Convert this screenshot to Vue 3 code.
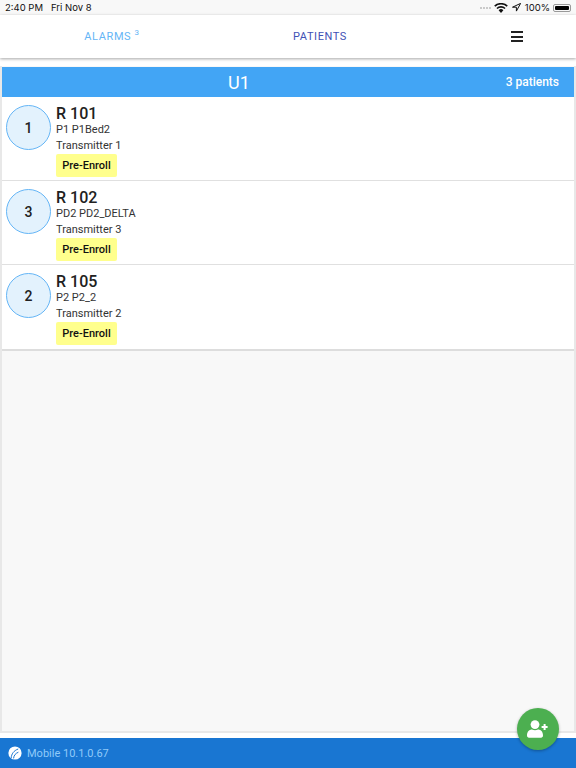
<template>
  <div class="screen">
    <div class="status-bar">
      <span class="status-time">2:40 PM</span>
      <span class="status-date">Fri Nov 8</span>
      <span class="status-right">
        <span class="dots"><i v-for="n in 4" :key="n"></i></span>
        <svg class="wifi" width="14" height="10" viewBox="0 0 14 10">
          <path d="M7 10 4.6 7.3a3.4 3.4 0 0 1 4.8 0z" fill="#111" />
          <path d="M3.5 6.1a5 5 0 0 1 7 0l1.1-1.2a6.7 6.7 0 0 0-9.2 0z" fill="#111" />
          <path d="M1.3 3.8a8.2 8.2 0 0 1 11.4 0l1.1-1.2A9.9 9.9 0 0 0 .2 2.6z" fill="#111" />
        </svg>
        <svg class="arrow" width="9" height="9" viewBox="0 0 9 9">
          <path d="M8.6.4.5 4.2h3.9v3.9z" fill="none" stroke="#111" stroke-width="1" />
        </svg>
        <span class="battery-text">100%</span>
        <span class="battery"><span class="battery-fill"></span></span>
      </span>
    </div>

    <nav class="nav">
      <a class="tab tab-alarms">ALARMS <sup>3</sup></a>
      <a class="tab tab-patients">PATIENTS</a>
      <div class="menu"><i></i><i></i><i></i></div>
    </nav>

    <main class="content">
      <section class="panel">
        <header class="panel-head">
          <span class="unit">U1</span>
          <span class="count">3 patients</span>
        </header>
        <div v-for="row in rows" :key="row.room" class="row">
          <div class="circle">{{ row.num }}</div>
          <div class="info">
            <div class="room">{{ row.room }}</div>
            <div class="line">{{ row.name }}</div>
            <div class="line">{{ row.tx }}</div>
            <div class="tag">Pre-Enroll</div>
          </div>
        </div>
      </section>
    </main>

    <footer class="footer">
      <svg class="logo" width="14" height="14" viewBox="0 0 14 14">
        <circle cx="7" cy="7" r="6.6" fill="#fff" />
        <path d="M3.2 12c.2-4 2.6-7.4 7-9M5.6 12.4c.2-2.8 1.8-5 4.8-6.2" fill="none" stroke="#1976d2" stroke-width="1" />
      </svg>
      <span class="version">Mobile 10.1.0.67</span>
    </footer>

    <button class="fab">
      <svg width="22" height="18" viewBox="0 0 22 18">
        <circle cx="8" cy="4.6" r="4.4" fill="#fff" />
        <path d="M0 15.6c0-4 2.4-6 5-6 1 .5 1.900.7 3 .7s2-.2 3-.7c2.600 0 5 2 5 6 0 1.400-.8 2.100-2 2.100H2c-1.200 0-2-.7-2-2.100z" fill="#fff" />
        <path d="M17.600 4v6M14.600 7h6" stroke="#fff" stroke-width="2" />
      </svg>
    </button>
  </div>
</template>

<script setup>
const rows = [
  { num: 1, room: "R 101", name: "P1 P1Bed2", tx: "Transmitter 1" },
  { num: 3, room: "R 102", name: "PD2 PD2_DELTA", tx: "Transmitter 3" },
  { num: 2, room: "R 105", name: "P2 P2_2", tx: "Transmitter 2" },
];
</script>

<style>
html,
body {
  margin: 0;
  background: #fff;
}
</style>

<style scoped>
.screen {
  position: relative;
  width: 576px;
  height: 768px;
  display: flex;
  flex-direction: column;
  overflow: hidden;
  font-family: Roboto, "Liberation Sans", sans-serif;
  background: #fff;
  color: #212121;
}

.status-bar {
  height: 15px;
  flex: none;
  display: flex;
  align-items: center;
  padding: 0 5px;
  background: #f8f8f8;
  font-size: 9.5px;
  color: #111;
  font-family: Inter, "Liberation Sans", sans-serif;
}
.status-date {
  margin-left: 8px;
}
.status-right {
  margin-left: auto;
  display: flex;
  align-items: center;
}
.dots {
  display: flex;
  gap: 1px;
  margin-right: 3px;
}
.dots i {
  width: 2px;
  height: 2px;
  border-radius: 50%;
  background: #bbb;
}
.wifi {
  margin-right: 4px;
}
.arrow {
  margin-right: 4px;
}
.battery-text {
  margin-right: 3px;
}
.battery {
  width: 18px;
  height: 8px;
  padding: 1px;
  box-sizing: border-box;
  border: 1px solid #999;
  border-radius: 2px;
  display: flex;
}
.battery-fill {
  flex: 1;
  background: #000;
  border-radius: 1px;
}

.nav {
  height: 43px;
  flex: none;
  display: grid;
  grid-template-columns: 224px 192px 1fr;
  align-items: center;
  background: #fff;
  box-shadow: 0 1px 3px rgba(0, 0, 0, 0.35);
  z-index: 1;
  font-size: 11px;
  letter-spacing: 0.6px;
}
.tab {
  text-align: center;
}
.tab-alarms {
  color: #64b5f6;
}
.tab-alarms sup {
  font-size: 8px;
  line-height: 0;
}
.tab-patients {
  color: #3f51b5;
}
.menu {
  justify-self: center;
  display: flex;
  flex-direction: column;
  gap: 2.500px;
  width: 12px;
  margin-left: 41px;
}
.menu i {
  height: 2px;
  background: #222;
}

.content {
  flex: 1;
  margin-top: 8px;
  margin-bottom: 5px;
  background: #f8f8f8;
  border: 1px solid #e8e8e8;
  border-width: 0 2px 2px;
}
.panel {
  background: #fff;
  border-bottom: 2px solid #ddd;
}
.panel-head {
  height: 30px;
  display: flex;
  align-items: center;
  justify-content: space-between;
  position: relative;
  padding: 0 15px;
  margin-top: 1px;
  background: #42a5f5;
  color: #fff;
}
.unit {
  position: absolute;
  left: 226px;
  font-size: 18px;
}
.count {
  margin-left: auto;
  font-size: 12px;
  font-weight: 500;
}

.row {
  height: 84px;
  box-sizing: border-box;
  display: flex;
  padding: 8px 4px 0;
  border-bottom: 1px solid #e0e0e0;
}
.row:last-child {
  border-bottom: none;
}
.circle {
  width: 45px;
  height: 45px;
  box-sizing: border-box;
  flex: none;
  display: flex;
  align-items: center;
  justify-content: center;
  border: 1px solid #64b5f6;
  border-radius: 50%;
  background: #e3f2fd;
  font-size: 14px;
  font-weight: 500;
}
.info {
  margin-left: 5px;
}
.room {
  font-size: 16px;
  font-weight: 500;
  line-height: 17px;
}
.line {
  font-size: 11px;
  line-height: 16px;
  color: #333;
}
.tag {
  width: 61px;
  height: 23px;
  margin-top: 0;
  line-height: 23px;
  text-align: center;
  border-radius: 2px;
  background: #ffff8d;
  font-size: 11px;
  font-weight: 500;
  color: #111;
}

.footer {
  height: 30px;
  flex: none;
  display: flex;
  align-items: center;
  padding-left: 8px;
  background: #1976d2;
  color: #90caf9;
  font-size: 11px;
}
.logo {
  margin-right: 5px;
}

.fab {
  position: absolute;
  right: 17px;
  bottom: 18px;
  width: 42px;
  height: 42px;
  padding: 0;
  border: none;
  border-radius: 50%;
  display: flex;
  align-items: center;
  justify-content: center;
  background: #4caf50;
  box-shadow: 0 1px 3px rgba(0, 0, 0, 0.3);
}
</style>
